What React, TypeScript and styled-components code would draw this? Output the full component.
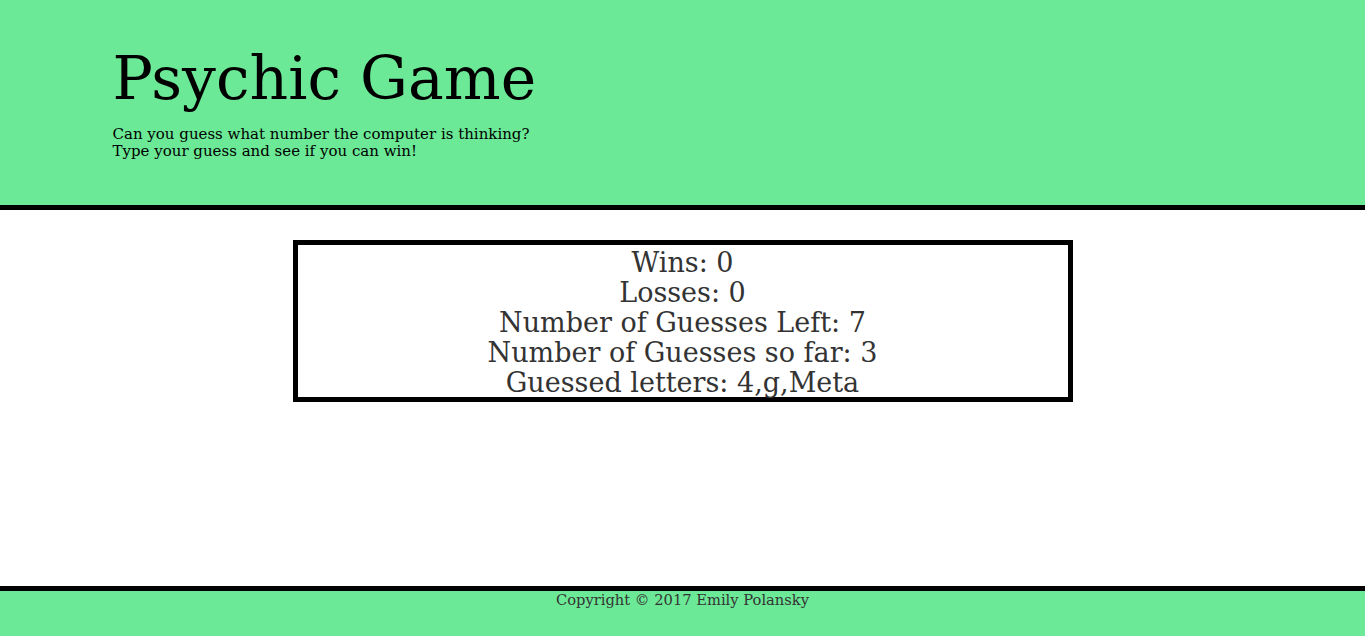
import React from "react";
import styled, { createGlobalStyle } from "styled-components";

const Global = createGlobalStyle`
  html, body { margin: 0; padding: 0; background: #fff; }
  body { font-family: "DejaVu Serif", "Liberation Serif", serif; color: #333; }
`;

const Page = styled.div`
  display: flex;
  flex-direction: column;
  min-height: 636px;
`;

const Header = styled.header`
  background: #6be996;
  border-bottom: 5px solid #000;
  box-sizing: border-box;
  height: 210px;
`;

const Container = styled.div`
  width: 1140px;
  margin: 0 auto;
`;

const Title = styled.h1`
  margin: 0;
  padding-top: 38px;
  font-size: 60px;
  font-weight: 400;
  line-height: 80px;
  color: #000;
`;

const Sub = styled.p`
  margin: 8px 0 0;
  font-size: 15px;
  line-height: 17px;
  color: #000;
`;

const Main = styled.main`
  flex: 1;
  display: flex;
  justify-content: center;
  align-items: flex-start;
  padding-top: 30px;
`;

const Box = styled.div`
  width: 780px;
  height: 162px;
  box-sizing: border-box;
  border: 5px solid #000;
  text-align: center;
  padding-top: 3px;
`;

const Line = styled.div`
  font-size: 27px;
  line-height: 30px;
  color: #333;
`;

const Footer = styled.footer`
  background: #6be996;
  border-top: 5px solid #000;
  height: 45px;
  text-align: center;
  font-size: 14.7px;
  line-height: 17px;
  color: #333;
`;

export default function App() {
  return (
    <Page>
      <Global />
      <Header>
        <Container>
          <Title>Psychic Game</Title>
          <Sub>
            Can you guess what number the computer is thinking?
            <br />
            Type your guess and see if you can win!
          </Sub>
        </Container>
      </Header>
      <Main>
        <Box>
          <Line>Wins: 0</Line>
          <Line>Losses: 0</Line>
          <Line>Number of Guesses Left: 7</Line>
          <Line>Number of Guesses so far: 3</Line>
          <Line>Guessed letters: 4,g,Meta</Line>
        </Box>
      </Main>
      <Footer>Copyright © 2017 Emily Polansky</Footer>
    </Page>
  );
}
